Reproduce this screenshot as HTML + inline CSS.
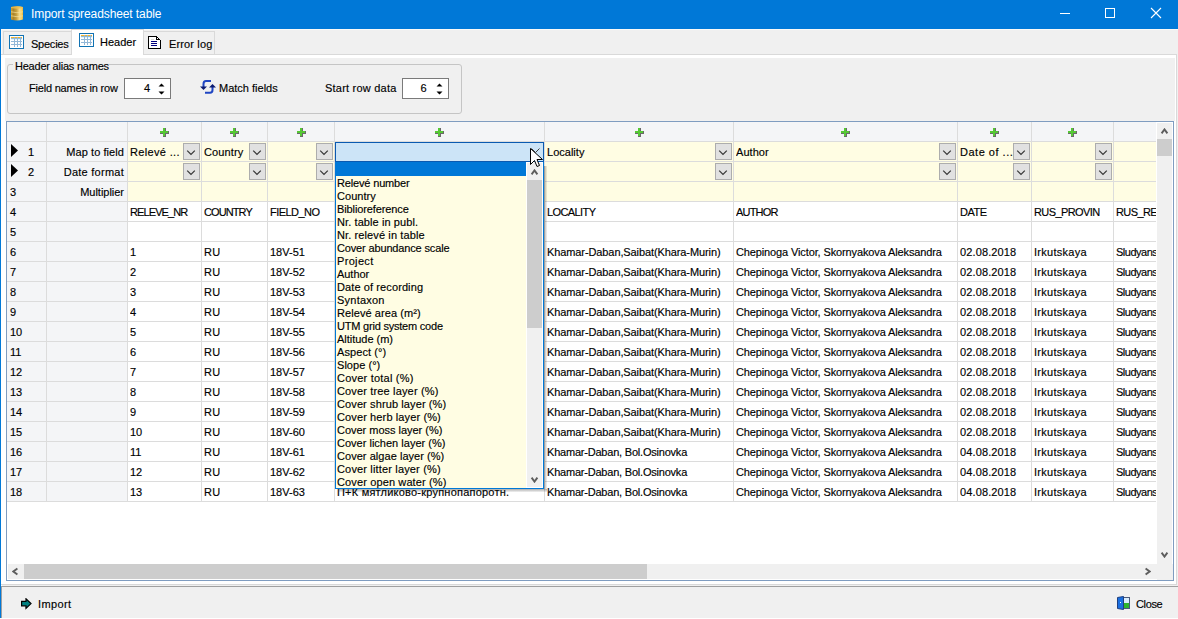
<!DOCTYPE html>
<html><head><meta charset="utf-8"><title>Import spreadsheet table</title>
<style>
*{margin:0;padding:0;box-sizing:border-box}
html,body{width:1178px;height:619px;overflow:hidden;background:#f0f0f0;position:relative;font-family:"Liberation Sans", sans-serif;font-size:11px;color:#000}
div{position:absolute}
.t{white-space:nowrap;line-height:13px;font-size:11px;-webkit-text-stroke:0.15px currentColor}
.chev{position:absolute}
</style></head>
<body>
<div style="left:0px;top:0px;width:1178px;height:29px;background:#0078d7"></div>
<div style="left:0px;top:0px;width:1px;height:618px;background:#0078d7"></div>
<div style="left:0px;top:618px;width:1178px;height:1px;background:#ffffff"></div>
<svg style="position:absolute;left:11px;top:6px" width="12" height="15" viewBox="0 0 12 15">
<defs><linearGradient id="g1" x1="0" x2="1" y1="0" y2="0"><stop offset="0" stop-color="#d0a030"/><stop offset="0.2" stop-color="#a8842c"/><stop offset="0.45" stop-color="#c8a040"/><stop offset="0.7" stop-color="#f6da88"/><stop offset="0.9" stop-color="#f2cf6a"/><stop offset="1" stop-color="#e8b030"/></linearGradient></defs>
<path d="M0 1 Q6 -0.5 12 1 L12 13.5 Q6 15.5 0 13.5 Z" fill="url(#g1)"/>
<path d="M0 1 Q6 -0.5 12 1 L12 2 Q6 3.5 0 2 Z" fill="#f0c050" opacity="0.8"/>
<path d="M0 5.8 Q6 7.6 12 5.8" stroke="#f6e2a0" stroke-width="0.9" fill="none" opacity="0.75"/>
<path d="M0 9.8 Q6 11.6 12 9.8" stroke="#f6e2a0" stroke-width="0.9" fill="none" opacity="0.75"/>
</svg>
<div class="t" style="left:31px;top:7px;color:#fff;font-size:12px;line-height:15px;letter-spacing:-0.1px;-webkit-text-stroke:0">Import spreadsheet table</div>
<div style="left:1060px;top:13px;width:10px;height:1px;background:#fff"></div>
<div style="left:1105px;top:8px;width:10px;height:10px;border:1px solid #fff"></div>
<svg style="position:absolute;left:1150px;top:7px" width="12" height="12" viewBox="0 0 12 12"><path d="M1 1 L11 11 M11 1 L1 11" stroke="#fff" stroke-width="1.1"/></svg>
<div style="left:1px;top:29px;width:1177px;height:1px;background:#fbfaf8"></div>
<div style="left:1px;top:29px;width:1px;height:557px;background:#fbfaf8"></div>
<div style="left:3px;top:31px;width:69px;height:24px;background:#f0f0f0;border:1px solid #d9d9d9;border-bottom:none"></div>
<div style="left:143px;top:31px;width:72px;height:24px;background:#f0f0f0;border:1px solid #d9d9d9;border-bottom:none"></div>
<div style="left:1px;top:54px;width:1176px;height:531px;background:#fff;border-top:1px solid #d9d9d9;border-right:1px solid #d9d9d9;border-bottom:1px solid #d9d9d9"></div>
<div style="left:71px;top:29px;width:73px;height:26px;background:#fff;border:1px solid #d9d9d9;border-bottom:none"></div>
<div style="left:5px;top:58px;width:1170px;height:63px;background:#f0f0f0"></div>
<svg style="position:absolute;left:9px;top:35px" width="15" height="14" viewBox="0 0 15 14" shape-rendering="crispEdges">
<rect x="0.5" y="0.5" width="14" height="13" fill="#fff" stroke="#1273b3"/>
<rect x="2" y="3" width="11" height="2" fill="#dff6ff"/>
<path d="M2 3.5 H13 M2 6.5 H13 M2 9.5 H13 M5.5 2 V12 M8.5 2 V12 M11.5 2 V12" stroke="#93b8d8" stroke-width="1"/>
<path d="M2 2.5 H5 M6 2.5 H8 M9 2.5 H11 M12 2.5 H13" stroke="#f7b526" stroke-width="1"/>
</svg>
<div class="t" style="left:31px;top:38px;letter-spacing:-0.234px">Species</div>
<svg style="position:absolute;left:79px;top:33px" width="15" height="14" viewBox="0 0 15 14" shape-rendering="crispEdges">
<rect x="0.5" y="0.5" width="14" height="13" fill="#fff" stroke="#1273b3"/>
<rect x="2" y="3" width="11" height="2" fill="#dff6ff"/>
<path d="M2 3.5 H13 M2 6.5 H13 M2 9.5 H13 M5.5 2 V12 M8.5 2 V12 M11.5 2 V12" stroke="#93b8d8" stroke-width="1"/>
<path d="M2 2.5 H5 M6 2.5 H8 M9 2.5 H11 M12 2.5 H13" stroke="#f7b526" stroke-width="1"/>
</svg>
<div class="t" style="left:100px;top:36px;letter-spacing:0px">Header</div>
<svg style="position:absolute;left:148px;top:36px" width="13" height="13" viewBox="0 0 13 13" shape-rendering="crispEdges">
<path d="M0.5 0.5 H8.5 L12.5 4.5 V12.5 H0.5 Z" fill="#fff" stroke="#000" stroke-width="1.2"/>
<path d="M8.5 0.5 V3.5 H12" fill="none" stroke="#000" stroke-width="1.2"/>
<path d="M3 3.5 H6" stroke="#d8d8d8"/>
<path d="M3 5.5 H9 M3 7.5 H9 M3 9.5 H9" stroke="#000080" stroke-width="1"/>
</svg>
<div class="t" style="left:169px;top:38px;letter-spacing:0.139px">Error log</div>
<div style="left:7px;top:64px;width:455px;height:50px;border:1px solid #c5c5c5;border-radius:3px"></div>
<div style="left:13px;top:60px;width:96px;height:10px;background:#f0f0f0"></div>
<div class="t" style="left:15px;top:60px;letter-spacing:-0.223px">Header alias names</div>
<div class="t" style="left:29px;top:82px;letter-spacing:-0.205px">Field names in row</div>
<div style="left:124px;top:78px;width:47px;height:21px;background:#fff;border:1px solid #7a7a7a"></div>
<div class="t" style="left:124px;top:82px;width:26px;text-align:right">4</div>
<svg style="position:absolute;left:158px;top:83px" width="7" height="12" viewBox="0 0 7 12">
<path d="M0.5 3.5 L3.5 0.5 L6.5 3.5 Z M0.5 8.5 L3.5 11.5 L6.5 8.5 Z" fill="#000"/></svg>
<div style="left:402px;top:78px;width:47px;height:21px;background:#fff;border:1px solid #7a7a7a"></div>
<div class="t" style="left:402px;top:82px;width:24.5px;text-align:right">6</div>
<svg style="position:absolute;left:436px;top:83px" width="7" height="12" viewBox="0 0 7 12">
<path d="M0.5 3.5 L3.5 0.5 L6.5 3.5 Z M0.5 8.5 L3.5 11.5 L6.5 8.5 Z" fill="#000"/></svg>
<svg style="position:absolute;left:197px;top:77px" width="22" height="20" viewBox="0 0 22 20">
<path d="M14 4 H9 Q6.5 4 6.5 7 V10" stroke="#1f45c2" stroke-width="2" fill="none"/>
<path d="M15.5 10 V13 Q15.5 15.8 13 15.8 H8" stroke="#1f45c2" stroke-width="2" fill="none"/>
<path d="M3 9.4 H10 L6.5 13 Z" fill="#0b1a70"/>
<path d="M12 10.6 H19 L15.5 7 Z" fill="#0b1a70"/>
</svg>
<div class="t" style="left:219px;top:82px;letter-spacing:0px">Match fields</div>
<div class="t" style="left:325px;top:82px;letter-spacing:0.215px">Start row data</div>
<div style="left:6px;top:121px;width:1168px;height:460px;background:#fff;border:1px solid #7f9cc0"></div>
<div style="left:7px;top:122px;width:120px;height:380px;background:#f4f5f7"></div>
<div style="left:127px;top:122px;width:1030px;height:19px;background:#f4f5f7"></div>
<div style="left:127px;top:141px;width:1030px;height:60px;background:#fffde3"></div>
<div style="left:7px;top:141px;width:1150px;height:1px;background:#dcdcdc"></div>
<div style="left:7px;top:161px;width:1150px;height:1px;background:#dcdcdc"></div>
<div style="left:7px;top:181px;width:1150px;height:1px;background:#dcdcdc"></div>
<div style="left:7px;top:201px;width:1150px;height:1px;background:#dcdcdc"></div>
<div style="left:7px;top:221px;width:1150px;height:1px;background:#dcdcdc"></div>
<div style="left:7px;top:241px;width:1150px;height:1px;background:#dcdcdc"></div>
<div style="left:7px;top:261px;width:1150px;height:1px;background:#dcdcdc"></div>
<div style="left:7px;top:281px;width:1150px;height:1px;background:#dcdcdc"></div>
<div style="left:7px;top:301px;width:1150px;height:1px;background:#dcdcdc"></div>
<div style="left:7px;top:321px;width:1150px;height:1px;background:#dcdcdc"></div>
<div style="left:7px;top:341px;width:1150px;height:1px;background:#dcdcdc"></div>
<div style="left:7px;top:361px;width:1150px;height:1px;background:#dcdcdc"></div>
<div style="left:7px;top:381px;width:1150px;height:1px;background:#dcdcdc"></div>
<div style="left:7px;top:401px;width:1150px;height:1px;background:#dcdcdc"></div>
<div style="left:7px;top:421px;width:1150px;height:1px;background:#dcdcdc"></div>
<div style="left:7px;top:441px;width:1150px;height:1px;background:#dcdcdc"></div>
<div style="left:7px;top:461px;width:1150px;height:1px;background:#dcdcdc"></div>
<div style="left:7px;top:481px;width:1150px;height:1px;background:#dcdcdc"></div>
<div style="left:7px;top:501px;width:1150px;height:1px;background:#dcdcdc"></div>
<div style="left:46px;top:122px;width:1px;height:380px;background:#dcdcdc"></div>
<div style="left:127px;top:122px;width:1px;height:380px;background:#dcdcdc"></div>
<div style="left:201px;top:122px;width:1px;height:380px;background:#dcdcdc"></div>
<div style="left:267px;top:122px;width:1px;height:380px;background:#dcdcdc"></div>
<div style="left:334px;top:122px;width:1px;height:380px;background:#dcdcdc"></div>
<div style="left:544px;top:122px;width:1px;height:380px;background:#dcdcdc"></div>
<div style="left:733px;top:122px;width:1px;height:380px;background:#dcdcdc"></div>
<div style="left:957px;top:122px;width:1px;height:380px;background:#dcdcdc"></div>
<div style="left:1031px;top:122px;width:1px;height:380px;background:#dcdcdc"></div>
<div style="left:1113px;top:122px;width:1px;height:380px;background:#dcdcdc"></div>
<svg style="position:absolute;left:160px;top:128px" width="9" height="9" viewBox="0 0 9 9" shape-rendering="crispEdges">
<path d="M3 0 H6 V3 H9 V6 H6 V9 H3 V6 H0 V3 H3 Z" fill="#6a6a6a"/>
<path d="M3 0 H5 V3 H8 V5 H5 V8 H3 V5 H0 V3 H3 Z" fill="#55c834"/>
</svg>
<svg style="position:absolute;left:230px;top:128px" width="9" height="9" viewBox="0 0 9 9" shape-rendering="crispEdges">
<path d="M3 0 H6 V3 H9 V6 H6 V9 H3 V6 H0 V3 H3 Z" fill="#6a6a6a"/>
<path d="M3 0 H5 V3 H8 V5 H5 V8 H3 V5 H0 V3 H3 Z" fill="#55c834"/>
</svg>
<svg style="position:absolute;left:297px;top:128px" width="9" height="9" viewBox="0 0 9 9" shape-rendering="crispEdges">
<path d="M3 0 H6 V3 H9 V6 H6 V9 H3 V6 H0 V3 H3 Z" fill="#6a6a6a"/>
<path d="M3 0 H5 V3 H8 V5 H5 V8 H3 V5 H0 V3 H3 Z" fill="#55c834"/>
</svg>
<svg style="position:absolute;left:435px;top:128px" width="9" height="9" viewBox="0 0 9 9" shape-rendering="crispEdges">
<path d="M3 0 H6 V3 H9 V6 H6 V9 H3 V6 H0 V3 H3 Z" fill="#6a6a6a"/>
<path d="M3 0 H5 V3 H8 V5 H5 V8 H3 V5 H0 V3 H3 Z" fill="#55c834"/>
</svg>
<svg style="position:absolute;left:635px;top:128px" width="9" height="9" viewBox="0 0 9 9" shape-rendering="crispEdges">
<path d="M3 0 H6 V3 H9 V6 H6 V9 H3 V6 H0 V3 H3 Z" fill="#6a6a6a"/>
<path d="M3 0 H5 V3 H8 V5 H5 V8 H3 V5 H0 V3 H3 Z" fill="#55c834"/>
</svg>
<svg style="position:absolute;left:841px;top:128px" width="9" height="9" viewBox="0 0 9 9" shape-rendering="crispEdges">
<path d="M3 0 H6 V3 H9 V6 H6 V9 H3 V6 H0 V3 H3 Z" fill="#6a6a6a"/>
<path d="M3 0 H5 V3 H8 V5 H5 V8 H3 V5 H0 V3 H3 Z" fill="#55c834"/>
</svg>
<svg style="position:absolute;left:990px;top:128px" width="9" height="9" viewBox="0 0 9 9" shape-rendering="crispEdges">
<path d="M3 0 H6 V3 H9 V6 H6 V9 H3 V6 H0 V3 H3 Z" fill="#6a6a6a"/>
<path d="M3 0 H5 V3 H8 V5 H5 V8 H3 V5 H0 V3 H3 Z" fill="#55c834"/>
</svg>
<svg style="position:absolute;left:1068px;top:128px" width="9" height="9" viewBox="0 0 9 9" shape-rendering="crispEdges">
<path d="M3 0 H6 V3 H9 V6 H6 V9 H3 V6 H0 V3 H3 Z" fill="#6a6a6a"/>
<path d="M3 0 H5 V3 H8 V5 H5 V8 H3 V5 H0 V3 H3 Z" fill="#55c834"/>
</svg>
<svg style="position:absolute;left:11px;top:144px" width="8" height="13" viewBox="0 0 8 13"><path d="M0 0 L7 6.5 L0 13 Z" fill="#000"/></svg>
<div class="t" style="left:28px;top:146px;">1</div>
<svg style="position:absolute;left:11px;top:164px" width="8" height="13" viewBox="0 0 8 13"><path d="M0 0 L7 6.5 L0 13 Z" fill="#000"/></svg>
<div class="t" style="left:28px;top:166px;">2</div>
<div class="t" style="left:10px;top:186px;">3</div>
<div class="t" style="left:10px;top:206px;">4</div>
<div class="t" style="left:10px;top:226px;">5</div>
<div class="t" style="left:10px;top:246px;">6</div>
<div class="t" style="left:10px;top:266px;">7</div>
<div class="t" style="left:10px;top:286px;">8</div>
<div class="t" style="left:10px;top:306px;">9</div>
<div class="t" style="left:10px;top:326px;">10</div>
<div class="t" style="left:10px;top:346px;">11</div>
<div class="t" style="left:10px;top:366px;">12</div>
<div class="t" style="left:10px;top:386px;">13</div>
<div class="t" style="left:10px;top:406px;">14</div>
<div class="t" style="left:10px;top:426px;">15</div>
<div class="t" style="left:10px;top:446px;">16</div>
<div class="t" style="left:10px;top:466px;">17</div>
<div class="t" style="left:10px;top:486px;">18</div>
<div class="t" style="right:1054px;top:146px;letter-spacing:0.073px">Map to field</div>
<div class="t" style="right:1054px;top:166px;letter-spacing:0.26px">Date format</div>
<div class="t" style="right:1054px;top:186px;letter-spacing:-0.021px">Multiplier</div>
<div class="t" style="left:130px;top:146px;letter-spacing:0.345px;width:71px;overflow:hidden">Relevé ...</div>
<div style="left:183px;top:143px;width:17px;height:17px;background:#e1e1e1;border:1px solid #adadad"></div>
<svg style="position:absolute;left:183px;top:143px" width="17" height="17" viewBox="0 0 17 17"><path d="M4.2 7.6 L8 11.4 L11.8 7.6" stroke="#383838" stroke-width="1.25" fill="none"/></svg>
<div class="t" style="left:204px;top:146px;letter-spacing:0.133px;width:63px;overflow:hidden">Country</div>
<div style="left:249px;top:143px;width:17px;height:17px;background:#e1e1e1;border:1px solid #adadad"></div>
<svg style="position:absolute;left:249px;top:143px" width="17" height="17" viewBox="0 0 17 17"><path d="M4.2 7.6 L8 11.4 L11.8 7.6" stroke="#383838" stroke-width="1.25" fill="none"/></svg>
<div style="left:316px;top:143px;width:17px;height:17px;background:#e1e1e1;border:1px solid #adadad"></div>
<svg style="position:absolute;left:316px;top:143px" width="17" height="17" viewBox="0 0 17 17"><path d="M4.2 7.6 L8 11.4 L11.8 7.6" stroke="#383838" stroke-width="1.25" fill="none"/></svg>
<div class="t" style="left:547px;top:146px;letter-spacing:0.014px;width:186px;overflow:hidden">Locality</div>
<div style="left:715px;top:143px;width:17px;height:17px;background:#e1e1e1;border:1px solid #adadad"></div>
<svg style="position:absolute;left:715px;top:143px" width="17" height="17" viewBox="0 0 17 17"><path d="M4.2 7.6 L8 11.4 L11.8 7.6" stroke="#383838" stroke-width="1.25" fill="none"/></svg>
<div class="t" style="left:736px;top:146px;letter-spacing:0.06px;width:221px;overflow:hidden">Author</div>
<div style="left:939px;top:143px;width:17px;height:17px;background:#e1e1e1;border:1px solid #adadad"></div>
<svg style="position:absolute;left:939px;top:143px" width="17" height="17" viewBox="0 0 17 17"><path d="M4.2 7.6 L8 11.4 L11.8 7.6" stroke="#383838" stroke-width="1.25" fill="none"/></svg>
<div class="t" style="left:960px;top:146px;letter-spacing:0.51px;width:71px;overflow:hidden">Date of ...</div>
<div style="left:1013px;top:143px;width:17px;height:17px;background:#e1e1e1;border:1px solid #adadad"></div>
<svg style="position:absolute;left:1013px;top:143px" width="17" height="17" viewBox="0 0 17 17"><path d="M4.2 7.6 L8 11.4 L11.8 7.6" stroke="#383838" stroke-width="1.25" fill="none"/></svg>
<div style="left:1095px;top:143px;width:17px;height:17px;background:#e1e1e1;border:1px solid #adadad"></div>
<svg style="position:absolute;left:1095px;top:143px" width="17" height="17" viewBox="0 0 17 17"><path d="M4.2 7.6 L8 11.4 L11.8 7.6" stroke="#383838" stroke-width="1.25" fill="none"/></svg>
<div style="left:183px;top:163px;width:17px;height:17px;background:#e1e1e1;border:1px solid #adadad"></div>
<svg style="position:absolute;left:183px;top:163px" width="17" height="17" viewBox="0 0 17 17"><path d="M4.2 7.6 L8 11.4 L11.8 7.6" stroke="#383838" stroke-width="1.25" fill="none"/></svg>
<div style="left:249px;top:163px;width:17px;height:17px;background:#e1e1e1;border:1px solid #adadad"></div>
<svg style="position:absolute;left:249px;top:163px" width="17" height="17" viewBox="0 0 17 17"><path d="M4.2 7.6 L8 11.4 L11.8 7.6" stroke="#383838" stroke-width="1.25" fill="none"/></svg>
<div style="left:316px;top:163px;width:17px;height:17px;background:#e1e1e1;border:1px solid #adadad"></div>
<svg style="position:absolute;left:316px;top:163px" width="17" height="17" viewBox="0 0 17 17"><path d="M4.2 7.6 L8 11.4 L11.8 7.6" stroke="#383838" stroke-width="1.25" fill="none"/></svg>
<div style="left:715px;top:163px;width:17px;height:17px;background:#e1e1e1;border:1px solid #adadad"></div>
<svg style="position:absolute;left:715px;top:163px" width="17" height="17" viewBox="0 0 17 17"><path d="M4.2 7.6 L8 11.4 L11.8 7.6" stroke="#383838" stroke-width="1.25" fill="none"/></svg>
<div style="left:939px;top:163px;width:17px;height:17px;background:#e1e1e1;border:1px solid #adadad"></div>
<svg style="position:absolute;left:939px;top:163px" width="17" height="17" viewBox="0 0 17 17"><path d="M4.2 7.6 L8 11.4 L11.8 7.6" stroke="#383838" stroke-width="1.25" fill="none"/></svg>
<div style="left:1013px;top:163px;width:17px;height:17px;background:#e1e1e1;border:1px solid #adadad"></div>
<svg style="position:absolute;left:1013px;top:163px" width="17" height="17" viewBox="0 0 17 17"><path d="M4.2 7.6 L8 11.4 L11.8 7.6" stroke="#383838" stroke-width="1.25" fill="none"/></svg>
<div style="left:1095px;top:163px;width:17px;height:17px;background:#e1e1e1;border:1px solid #adadad"></div>
<svg style="position:absolute;left:1095px;top:163px" width="17" height="17" viewBox="0 0 17 17"><path d="M4.2 7.6 L8 11.4 L11.8 7.6" stroke="#383838" stroke-width="1.25" fill="none"/></svg>
<div class="t" style="left:130px;top:206px;letter-spacing:-0.9px;width:71px;overflow:hidden">RELEVE_NR</div>
<div class="t" style="left:204px;top:206px;letter-spacing:-0.9px;width:63px;overflow:hidden">COUNTRY</div>
<div class="t" style="left:270px;top:206px;letter-spacing:-0.55px;width:64px;overflow:hidden">FIELD_NO</div>
<div class="t" style="left:337px;top:206px;letter-spacing:-0.6px;width:207px;overflow:hidden">SYNTAXON</div>
<div class="t" style="left:547px;top:206px;letter-spacing:-0.6px;width:186px;overflow:hidden">LOCALITY</div>
<div class="t" style="left:736px;top:206px;letter-spacing:-0.8px;width:221px;overflow:hidden">AUTHOR</div>
<div class="t" style="left:960px;top:206px;letter-spacing:-0.45px;width:71px;overflow:hidden">DATE</div>
<div class="t" style="left:1034px;top:206px;letter-spacing:-0.6px;width:79px;overflow:hidden">RUS_PROVIN</div>
<div class="t" style="left:1116px;top:206px;letter-spacing:-0.6px;width:41px;overflow:hidden">RUS_REGION</div>
<div class="t" style="left:130px;top:246px;;width:71px;overflow:hidden">1</div>
<div class="t" style="left:204px;top:246px;letter-spacing:0.3px;width:63px;overflow:hidden">RU</div>
<div class="t" style="left:270px;top:246px;;width:64px;overflow:hidden">18V-51</div>
<div class="t" style="left:337px;top:246px;letter-spacing:0.214px;width:207px;overflow:hidden">П+К мятликово-крупнопапоротн.</div>
<div class="t" style="left:547px;top:246px;letter-spacing:-0.1px;width:186px;overflow:hidden">Khamar-Daban,Saibat(Khara-Murin)</div>
<div class="t" style="left:736px;top:246px;letter-spacing:-0.125px;width:221px;overflow:hidden">Chepinoga Victor, Skornyakova Aleksandra</div>
<div class="t" style="left:960px;top:246px;letter-spacing:0.13px;width:71px;overflow:hidden">02.08.2018</div>
<div class="t" style="left:1034px;top:246px;letter-spacing:0.27px;width:79px;overflow:hidden">Irkutskaya</div>
<div class="t" style="left:1116px;top:246px;letter-spacing:-0.5px;width:41px;overflow:hidden">Sludyanskiy</div>
<div class="t" style="left:130px;top:266px;;width:71px;overflow:hidden">2</div>
<div class="t" style="left:204px;top:266px;letter-spacing:0.3px;width:63px;overflow:hidden">RU</div>
<div class="t" style="left:270px;top:266px;;width:64px;overflow:hidden">18V-52</div>
<div class="t" style="left:337px;top:266px;letter-spacing:0.214px;width:207px;overflow:hidden">П+К мятликово-крупнопапоротн.</div>
<div class="t" style="left:547px;top:266px;letter-spacing:-0.1px;width:186px;overflow:hidden">Khamar-Daban,Saibat(Khara-Murin)</div>
<div class="t" style="left:736px;top:266px;letter-spacing:-0.125px;width:221px;overflow:hidden">Chepinoga Victor, Skornyakova Aleksandra</div>
<div class="t" style="left:960px;top:266px;letter-spacing:0.13px;width:71px;overflow:hidden">02.08.2018</div>
<div class="t" style="left:1034px;top:266px;letter-spacing:0.27px;width:79px;overflow:hidden">Irkutskaya</div>
<div class="t" style="left:1116px;top:266px;letter-spacing:-0.5px;width:41px;overflow:hidden">Sludyanskiy</div>
<div class="t" style="left:130px;top:286px;;width:71px;overflow:hidden">3</div>
<div class="t" style="left:204px;top:286px;letter-spacing:0.3px;width:63px;overflow:hidden">RU</div>
<div class="t" style="left:270px;top:286px;;width:64px;overflow:hidden">18V-53</div>
<div class="t" style="left:337px;top:286px;letter-spacing:0.214px;width:207px;overflow:hidden">П+К мятликово-крупнопапоротн.</div>
<div class="t" style="left:547px;top:286px;letter-spacing:-0.1px;width:186px;overflow:hidden">Khamar-Daban,Saibat(Khara-Murin)</div>
<div class="t" style="left:736px;top:286px;letter-spacing:-0.125px;width:221px;overflow:hidden">Chepinoga Victor, Skornyakova Aleksandra</div>
<div class="t" style="left:960px;top:286px;letter-spacing:0.13px;width:71px;overflow:hidden">02.08.2018</div>
<div class="t" style="left:1034px;top:286px;letter-spacing:0.27px;width:79px;overflow:hidden">Irkutskaya</div>
<div class="t" style="left:1116px;top:286px;letter-spacing:-0.5px;width:41px;overflow:hidden">Sludyanskiy</div>
<div class="t" style="left:130px;top:306px;;width:71px;overflow:hidden">4</div>
<div class="t" style="left:204px;top:306px;letter-spacing:0.3px;width:63px;overflow:hidden">RU</div>
<div class="t" style="left:270px;top:306px;;width:64px;overflow:hidden">18V-54</div>
<div class="t" style="left:337px;top:306px;letter-spacing:0.214px;width:207px;overflow:hidden">П+К мятликово-крупнопапоротн.</div>
<div class="t" style="left:547px;top:306px;letter-spacing:-0.1px;width:186px;overflow:hidden">Khamar-Daban,Saibat(Khara-Murin)</div>
<div class="t" style="left:736px;top:306px;letter-spacing:-0.125px;width:221px;overflow:hidden">Chepinoga Victor, Skornyakova Aleksandra</div>
<div class="t" style="left:960px;top:306px;letter-spacing:0.13px;width:71px;overflow:hidden">02.08.2018</div>
<div class="t" style="left:1034px;top:306px;letter-spacing:0.27px;width:79px;overflow:hidden">Irkutskaya</div>
<div class="t" style="left:1116px;top:306px;letter-spacing:-0.5px;width:41px;overflow:hidden">Sludyanskiy</div>
<div class="t" style="left:130px;top:326px;;width:71px;overflow:hidden">5</div>
<div class="t" style="left:204px;top:326px;letter-spacing:0.3px;width:63px;overflow:hidden">RU</div>
<div class="t" style="left:270px;top:326px;;width:64px;overflow:hidden">18V-55</div>
<div class="t" style="left:337px;top:326px;letter-spacing:0.214px;width:207px;overflow:hidden">П+К мятликово-крупнопапоротн.</div>
<div class="t" style="left:547px;top:326px;letter-spacing:-0.1px;width:186px;overflow:hidden">Khamar-Daban,Saibat(Khara-Murin)</div>
<div class="t" style="left:736px;top:326px;letter-spacing:-0.125px;width:221px;overflow:hidden">Chepinoga Victor, Skornyakova Aleksandra</div>
<div class="t" style="left:960px;top:326px;letter-spacing:0.13px;width:71px;overflow:hidden">02.08.2018</div>
<div class="t" style="left:1034px;top:326px;letter-spacing:0.27px;width:79px;overflow:hidden">Irkutskaya</div>
<div class="t" style="left:1116px;top:326px;letter-spacing:-0.5px;width:41px;overflow:hidden">Sludyanskiy</div>
<div class="t" style="left:130px;top:346px;;width:71px;overflow:hidden">6</div>
<div class="t" style="left:204px;top:346px;letter-spacing:0.3px;width:63px;overflow:hidden">RU</div>
<div class="t" style="left:270px;top:346px;;width:64px;overflow:hidden">18V-56</div>
<div class="t" style="left:337px;top:346px;letter-spacing:0.214px;width:207px;overflow:hidden">П+К мятликово-крупнопапоротн.</div>
<div class="t" style="left:547px;top:346px;letter-spacing:-0.1px;width:186px;overflow:hidden">Khamar-Daban,Saibat(Khara-Murin)</div>
<div class="t" style="left:736px;top:346px;letter-spacing:-0.125px;width:221px;overflow:hidden">Chepinoga Victor, Skornyakova Aleksandra</div>
<div class="t" style="left:960px;top:346px;letter-spacing:0.13px;width:71px;overflow:hidden">02.08.2018</div>
<div class="t" style="left:1034px;top:346px;letter-spacing:0.27px;width:79px;overflow:hidden">Irkutskaya</div>
<div class="t" style="left:1116px;top:346px;letter-spacing:-0.5px;width:41px;overflow:hidden">Sludyanskiy</div>
<div class="t" style="left:130px;top:366px;;width:71px;overflow:hidden">7</div>
<div class="t" style="left:204px;top:366px;letter-spacing:0.3px;width:63px;overflow:hidden">RU</div>
<div class="t" style="left:270px;top:366px;;width:64px;overflow:hidden">18V-57</div>
<div class="t" style="left:337px;top:366px;letter-spacing:0.214px;width:207px;overflow:hidden">П+К мятликово-крупнопапоротн.</div>
<div class="t" style="left:547px;top:366px;letter-spacing:-0.1px;width:186px;overflow:hidden">Khamar-Daban,Saibat(Khara-Murin)</div>
<div class="t" style="left:736px;top:366px;letter-spacing:-0.125px;width:221px;overflow:hidden">Chepinoga Victor, Skornyakova Aleksandra</div>
<div class="t" style="left:960px;top:366px;letter-spacing:0.13px;width:71px;overflow:hidden">02.08.2018</div>
<div class="t" style="left:1034px;top:366px;letter-spacing:0.27px;width:79px;overflow:hidden">Irkutskaya</div>
<div class="t" style="left:1116px;top:366px;letter-spacing:-0.5px;width:41px;overflow:hidden">Sludyanskiy</div>
<div class="t" style="left:130px;top:386px;;width:71px;overflow:hidden">8</div>
<div class="t" style="left:204px;top:386px;letter-spacing:0.3px;width:63px;overflow:hidden">RU</div>
<div class="t" style="left:270px;top:386px;;width:64px;overflow:hidden">18V-58</div>
<div class="t" style="left:337px;top:386px;letter-spacing:0.214px;width:207px;overflow:hidden">П+К мятликово-крупнопапоротн.</div>
<div class="t" style="left:547px;top:386px;letter-spacing:-0.1px;width:186px;overflow:hidden">Khamar-Daban,Saibat(Khara-Murin)</div>
<div class="t" style="left:736px;top:386px;letter-spacing:-0.125px;width:221px;overflow:hidden">Chepinoga Victor, Skornyakova Aleksandra</div>
<div class="t" style="left:960px;top:386px;letter-spacing:0.13px;width:71px;overflow:hidden">02.08.2018</div>
<div class="t" style="left:1034px;top:386px;letter-spacing:0.27px;width:79px;overflow:hidden">Irkutskaya</div>
<div class="t" style="left:1116px;top:386px;letter-spacing:-0.5px;width:41px;overflow:hidden">Sludyanskiy</div>
<div class="t" style="left:130px;top:406px;;width:71px;overflow:hidden">9</div>
<div class="t" style="left:204px;top:406px;letter-spacing:0.3px;width:63px;overflow:hidden">RU</div>
<div class="t" style="left:270px;top:406px;;width:64px;overflow:hidden">18V-59</div>
<div class="t" style="left:337px;top:406px;letter-spacing:0.214px;width:207px;overflow:hidden">П+К мятликово-крупнопапоротн.</div>
<div class="t" style="left:547px;top:406px;letter-spacing:-0.1px;width:186px;overflow:hidden">Khamar-Daban,Saibat(Khara-Murin)</div>
<div class="t" style="left:736px;top:406px;letter-spacing:-0.125px;width:221px;overflow:hidden">Chepinoga Victor, Skornyakova Aleksandra</div>
<div class="t" style="left:960px;top:406px;letter-spacing:0.13px;width:71px;overflow:hidden">02.08.2018</div>
<div class="t" style="left:1034px;top:406px;letter-spacing:0.27px;width:79px;overflow:hidden">Irkutskaya</div>
<div class="t" style="left:1116px;top:406px;letter-spacing:-0.5px;width:41px;overflow:hidden">Sludyanskiy</div>
<div class="t" style="left:130px;top:426px;;width:71px;overflow:hidden">10</div>
<div class="t" style="left:204px;top:426px;letter-spacing:0.3px;width:63px;overflow:hidden">RU</div>
<div class="t" style="left:270px;top:426px;;width:64px;overflow:hidden">18V-60</div>
<div class="t" style="left:337px;top:426px;letter-spacing:0.214px;width:207px;overflow:hidden">П+К мятликово-крупнопапоротн.</div>
<div class="t" style="left:547px;top:426px;letter-spacing:-0.1px;width:186px;overflow:hidden">Khamar-Daban,Saibat(Khara-Murin)</div>
<div class="t" style="left:736px;top:426px;letter-spacing:-0.125px;width:221px;overflow:hidden">Chepinoga Victor, Skornyakova Aleksandra</div>
<div class="t" style="left:960px;top:426px;letter-spacing:0.13px;width:71px;overflow:hidden">02.08.2018</div>
<div class="t" style="left:1034px;top:426px;letter-spacing:0.27px;width:79px;overflow:hidden">Irkutskaya</div>
<div class="t" style="left:1116px;top:426px;letter-spacing:-0.5px;width:41px;overflow:hidden">Sludyanskiy</div>
<div class="t" style="left:130px;top:446px;;width:71px;overflow:hidden">11</div>
<div class="t" style="left:204px;top:446px;letter-spacing:0.3px;width:63px;overflow:hidden">RU</div>
<div class="t" style="left:270px;top:446px;;width:64px;overflow:hidden">18V-61</div>
<div class="t" style="left:337px;top:446px;letter-spacing:0.214px;width:207px;overflow:hidden">П+К мятликово-крупнопапоротн.</div>
<div class="t" style="left:547px;top:446px;letter-spacing:-0.21px;width:186px;overflow:hidden">Khamar-Daban, Bol.Osinovka</div>
<div class="t" style="left:736px;top:446px;letter-spacing:-0.125px;width:221px;overflow:hidden">Chepinoga Victor, Skornyakova Aleksandra</div>
<div class="t" style="left:960px;top:446px;letter-spacing:0.13px;width:71px;overflow:hidden">04.08.2018</div>
<div class="t" style="left:1034px;top:446px;letter-spacing:0.27px;width:79px;overflow:hidden">Irkutskaya</div>
<div class="t" style="left:1116px;top:446px;letter-spacing:-0.5px;width:41px;overflow:hidden">Sludyanskiy</div>
<div class="t" style="left:130px;top:466px;;width:71px;overflow:hidden">12</div>
<div class="t" style="left:204px;top:466px;letter-spacing:0.3px;width:63px;overflow:hidden">RU</div>
<div class="t" style="left:270px;top:466px;;width:64px;overflow:hidden">18V-62</div>
<div class="t" style="left:337px;top:466px;letter-spacing:0.214px;width:207px;overflow:hidden">П+К мятликово-крупнопапоротн.</div>
<div class="t" style="left:547px;top:466px;letter-spacing:-0.21px;width:186px;overflow:hidden">Khamar-Daban, Bol.Osinovka</div>
<div class="t" style="left:736px;top:466px;letter-spacing:-0.125px;width:221px;overflow:hidden">Chepinoga Victor, Skornyakova Aleksandra</div>
<div class="t" style="left:960px;top:466px;letter-spacing:0.13px;width:71px;overflow:hidden">04.08.2018</div>
<div class="t" style="left:1034px;top:466px;letter-spacing:0.27px;width:79px;overflow:hidden">Irkutskaya</div>
<div class="t" style="left:1116px;top:466px;letter-spacing:-0.5px;width:41px;overflow:hidden">Sludyanskiy</div>
<div class="t" style="left:130px;top:486px;;width:71px;overflow:hidden">13</div>
<div class="t" style="left:204px;top:486px;letter-spacing:0.3px;width:63px;overflow:hidden">RU</div>
<div class="t" style="left:270px;top:486px;;width:64px;overflow:hidden">18V-63</div>
<div class="t" style="left:337px;top:486px;letter-spacing:0.214px;width:207px;overflow:hidden">П+К мятликово-крупнопапоротн.</div>
<div class="t" style="left:547px;top:486px;letter-spacing:-0.21px;width:186px;overflow:hidden">Khamar-Daban, Bol.Osinovka</div>
<div class="t" style="left:736px;top:486px;letter-spacing:-0.125px;width:221px;overflow:hidden">Chepinoga Victor, Skornyakova Aleksandra</div>
<div class="t" style="left:960px;top:486px;letter-spacing:0.13px;width:71px;overflow:hidden">04.08.2018</div>
<div class="t" style="left:1034px;top:486px;letter-spacing:0.27px;width:79px;overflow:hidden">Irkutskaya</div>
<div class="t" style="left:1116px;top:486px;letter-spacing:-0.5px;width:41px;overflow:hidden">Sludyanskiy</div>
<div style="left:1156px;top:122px;width:17px;height:442px;background:#f0f0f0;border:1px solid #fff;border-bottom:none"></div>
<div style="left:1157px;top:139px;width:15px;height:17px;background:#cdcdcd"></div>
<svg style="position:absolute;left:1160px;top:128px" width="9" height="6" viewBox="0 0 9 6"><path d="M1.6 5.4 L4.5 1.4 L7.4 5.4" stroke="#5d5d5d" stroke-width="1.9" fill="none"/></svg>
<svg style="position:absolute;left:1160px;top:552px" width="9" height="6" viewBox="0 0 9 6"><path d="M1.6 0.6 L4.5 4.6 L7.4 0.6" stroke="#5d5d5d" stroke-width="1.9" fill="none"/></svg>
<div style="left:7px;top:563px;width:1150px;height:17px;background:#f0f0f0;border:1px solid #fff;border-right:none"></div>
<div style="left:24px;top:564px;width:623px;height:15px;background:#cdcdcd"></div>
<svg style="position:absolute;left:12px;top:567px" width="6" height="9" viewBox="0 0 6 9"><path d="M5.4 1.6 L1.4 4.5 L5.4 7.4" stroke="#5d5d5d" stroke-width="1.9" fill="none"/></svg>
<svg style="position:absolute;left:1145px;top:567px" width="6" height="9" viewBox="0 0 6 9"><path d="M0.6 1.6 L4.6 4.5 L0.6 7.4" stroke="#5d5d5d" stroke-width="1.9" fill="none"/></svg>
<div style="left:1157px;top:564px;width:16px;height:16px;background:#f0f0f0"></div>
<div style="left:335px;top:142px;width:209px;height:20px;background:#cce4f7;border:1px solid #0a5ab0"></div>
<svg style="position:absolute;left:531px;top:148px" width="9" height="5" viewBox="0 0 9 5"><path d="M0.5 0.5 L4.5 4.5 L8.5 0.5" stroke="#404040" stroke-width="1" fill="none"/></svg>
<div style="left:544px;top:166px;width:3px;height:323px;background:linear-gradient(to right,rgba(0,0,0,0.32),rgba(0,0,0,0.05))"></div>
<div style="left:339px;top:489px;width:208px;height:3px;background:linear-gradient(to bottom,rgba(0,0,0,0.32),rgba(0,0,0,0.05))"></div>
<div style="left:335px;top:162px;width:209px;height:327px;background:#fffde3;border:1px solid #0078d7;border-top:none"></div>
<div style="left:336px;top:162px;width:190px;height:14px;background:#0078d7"></div>
<div class="t" style="left:337px;top:177px;line-height:13px;letter-spacing:-0.159px">Relevé number</div>
<div class="t" style="left:337px;top:190px;line-height:13px;letter-spacing:0.034px">Country</div>
<div class="t" style="left:337px;top:203px;line-height:13px;letter-spacing:-0.114px">Biblioreference</div>
<div class="t" style="left:337px;top:216px;line-height:13px;letter-spacing:0.095px">Nr. table in publ.</div>
<div class="t" style="left:337px;top:229px;line-height:13px;letter-spacing:0.111px">Nr. relevé in table</div>
<div class="t" style="left:337px;top:242px;line-height:13px;letter-spacing:-0.15px">Cover abundance scale</div>
<div class="t" style="left:337px;top:255px;line-height:13px;letter-spacing:0.333px">Project</div>
<div class="t" style="left:337px;top:268px;line-height:13px;letter-spacing:-0.04px">Author</div>
<div class="t" style="left:337px;top:281px;line-height:13px;letter-spacing:0.101px">Date of recording</div>
<div class="t" style="left:337px;top:294px;line-height:13px;letter-spacing:0.229px">Syntaxon</div>
<div class="t" style="left:337px;top:307px;line-height:13px;letter-spacing:0.08px">Relevé area (m²)</div>
<div class="t" style="left:337px;top:320px;line-height:13px;letter-spacing:-0.211px">UTM grid system code</div>
<div class="t" style="left:337px;top:333px;line-height:13px;letter-spacing:-0.027px">Altitude (m)</div>
<div class="t" style="left:337px;top:346px;line-height:13px;letter-spacing:0.078px">Aspect (°)</div>
<div class="t" style="left:337px;top:359px;line-height:13px;letter-spacing:0.039px">Slope (°)</div>
<div class="t" style="left:337px;top:372px;line-height:13px;letter-spacing:0.214px">Cover total (%)</div>
<div class="t" style="left:337px;top:385px;line-height:13px;letter-spacing:0.153px">Cover tree layer (%)</div>
<div class="t" style="left:337px;top:398px;line-height:13px;letter-spacing:0.11px">Cover shrub layer (%)</div>
<div class="t" style="left:337px;top:411px;line-height:13px;letter-spacing:0.121px">Cover herb layer (%)</div>
<div class="t" style="left:337px;top:424px;line-height:13px;letter-spacing:-0.02px">Cover moss layer (%)</div>
<div class="t" style="left:337px;top:437px;line-height:13px;letter-spacing:0.009px">Cover lichen layer (%)</div>
<div class="t" style="left:337px;top:450px;line-height:13px;letter-spacing:0.045px">Cover algae layer (%)</div>
<div class="t" style="left:337px;top:463px;line-height:13px;letter-spacing:0.158px">Cover litter layer (%)</div>
<div class="t" style="left:337px;top:476px;line-height:13px;letter-spacing:0.126px">Cover open water (%)</div>
<div style="left:526px;top:162px;width:17px;height:326px;background:#f0f0f0;border:1px solid #fff"></div>
<div style="left:527px;top:180px;width:15px;height:148px;background:#cdcdcd"></div>
<svg style="position:absolute;left:530px;top:169px" width="9" height="6" viewBox="0 0 9 6"><path d="M1.6 5.4 L4.5 1.4 L7.4 5.4" stroke="#5d5d5d" stroke-width="1.9" fill="none"/></svg>
<svg style="position:absolute;left:530px;top:477px" width="9" height="6" viewBox="0 0 9 6"><path d="M1.6 0.6 L4.5 4.6 L7.4 0.6" stroke="#5d5d5d" stroke-width="1.9" fill="none"/></svg>
<svg style="position:absolute;left:530px;top:148px" width="14" height="21" viewBox="0 0 14 21">
<path d="M0.5 0.5 L0.5 16.5 L4.5 12.5 L7 18.5 L9.5 17.5 L7 11.5 L12.5 11.5 Z" fill="#fff" stroke="#000" stroke-width="1"/>
</svg>
<div style="left:1px;top:586px;width:1177px;height:32px;background:#f0f0f0;border-top:1px solid #a0a0a0;border-left:1px solid #a0a0a0"></div>
<svg style="position:absolute;left:21px;top:598px" width="11" height="12" viewBox="0 0 11 12">
<path d="M0.6 3.4 H5 V0.8 L10 5.6 L5 10.4 V7.8 H0.6 Z" fill="#008080" stroke="#000" stroke-width="1.2" stroke-linejoin="miter"/>
</svg>
<div class="t" style="left:38px;top:598px;letter-spacing:0.4px">Import</div>
<svg style="position:absolute;left:1117px;top:596px" width="13" height="14" viewBox="0 0 13 14">
<rect x="6.5" y="1.5" width="6" height="11" fill="#d8ecfc" stroke="#4a5a7a"/>
<rect x="7" y="7" width="5" height="5" fill="#2cb52c"/>
<path d="M0.5 1.5 L6.5 0.5 V13.5 L0.5 12.5 Z" fill="#1a6fe0" stroke="#1f3f7f"/>
<rect x="3" y="6" width="1" height="1" fill="#fff"/>
</svg>
<div class="t" style="left:1136px;top:598px;letter-spacing:-0.35px">Close</div>
</body></html>
